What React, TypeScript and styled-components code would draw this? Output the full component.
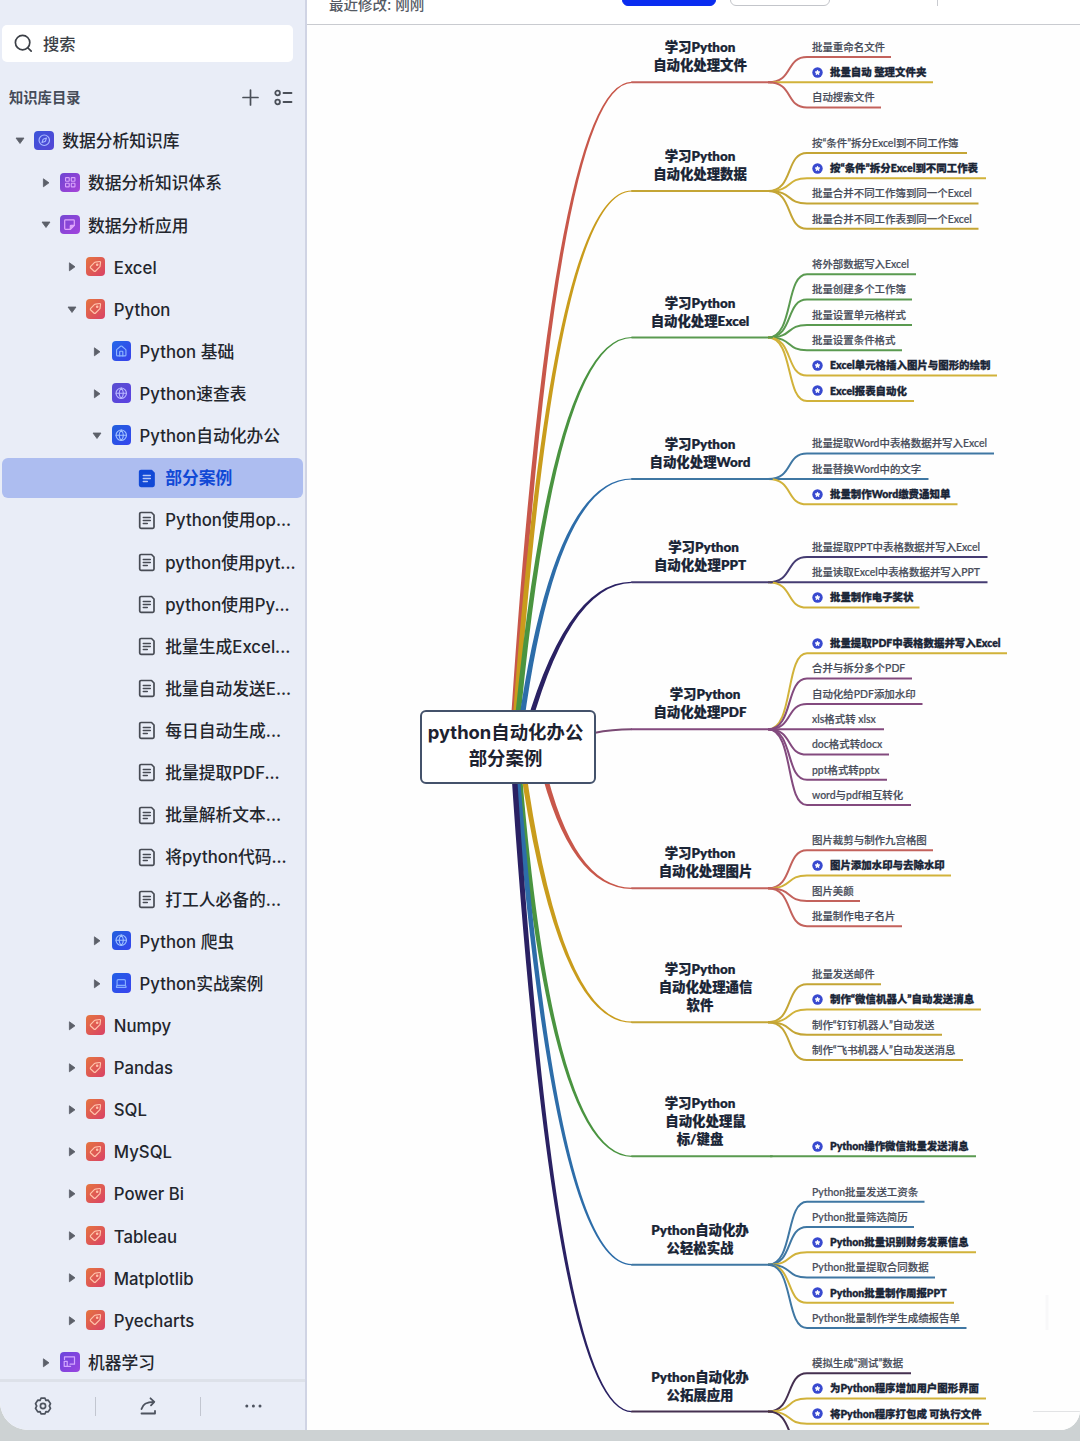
import { ReactNode } from "react";
import styled, { createGlobalStyle } from "styled-components";
import { Compass, Globe, House, Laptop, LayoutGrid } from "lucide-react";

// styles
const GlobalStyle = createGlobalStyle`
  * {
    box-sizing: border-box;
  }
  body {
    margin: 0;
    background: #cdd2d3;
    font-family: Inter, "Noto Sans CJK SC", sans-serif;
  }
`;

const Page = styled.div`
  width: 1080px;
  height: 1441px;
  padding-bottom: 11px;
  background: #cdd2d3;
  overflow: hidden;
`;

const Window = styled.div`
  display: flex;
  height: 1430px;
  border-radius: 0 0 20px 28px;
  background: #fff;
  overflow: hidden;
`;

const Sidebar = styled.aside`
  display: flex;
  flex-direction: column;
  width: 307px;
  flex: none;
  background: #e9edf7;
  border-right: 2px solid #d0d4e4;
`;

const SearchBox = styled.div`
  display: flex;
  align-items: center;
  gap: 10px;
  width: 291px;
  height: 37px;
  flex: none;
  margin: 25px 0 0 2px;
  padding: 0 0 1px 12px;
  border-radius: 5px;
  background: #fff;
  color: #3b3f46;
  font-size: 16.3px;
  font-weight: 500;

  span {
    margin-top: -1px;
  }
`;

const DirHeader = styled.div`
  display: flex;
  align-items: center;
  height: 58px;
  flex: none;
  padding: 13px 12px 0 9px;
  color: #454b57;
  font-size: 14.3px;
  font-weight: 600;

  span {
    flex: 1;
    margin-top: -2px;
  }
  svg + svg {
    margin-left: 15px;
  }
`;

const Tree = styled.div`
  flex: 1;
  min-height: 0;
  overflow: hidden;
`;

const Row = styled.div<{ $level: number; $active?: boolean }>`
  display: flex;
  align-items: center;
  height: ${(p) => (p.$active ? "40px" : "42.14px")};
  margin: ${(p) => (p.$active ? "1px 2px 1.14px" : "0")};
  padding-left: ${(p) => (p.$active ? 11 : 13) + p.$level * 25.75}px;
  border-radius: 6px;
  color: ${(p) => (p.$active ? "#1149d6" : "#23262d")};
  font-size: 16.75px;
  font-weight: ${(p) => (p.$active ? 700 : 500)};
  white-space: nowrap;
  background: ${(p) => (p.$active ? "#adbdf0" : "transparent")};
`;

const CaretSlot = styled.div`
  display: flex;
  justify-content: center;
  width: 14px;
  margin-right: 7px;
  flex: none;
`;

const IconSlot = styled.div<{ $doc: boolean }>`
  display: flex;
  justify-content: center;
  width: 20px;
  margin-right: 8.3px;
  padding-right: ${(p) => (p.$doc ? 1 : 0)}px;
  flex: none;

  svg {
    flex: none;
  }
`;

const Badge = styled.div<{ $bg: string }>`
  display: flex;
  align-items: center;
  justify-content: center;
  width: 19.5px;
  height: 19.5px;
  margin-top: -1.5px;
  border-radius: 4px;
  background: linear-gradient(135deg, ${(p) => p.$bg});
`;

const Label = styled.span`
  padding-top: 0.6px;
  line-height: 24px;
`;

const BottomBar = styled.div`
  display: flex;
  align-items: center;
  height: 51px;
  flex: none;
  border-top: 3px solid #dde1e9;
  color: #4d535f;
`;

const Action = styled.div`
  display: flex;
  justify-content: center;
  align-items: center;
  flex: 1;
  height: 19px;

  & + & {
    border-left: 1.5px solid #c2c6d0;
  }
  &:first-child {
    padding-right: 9px;
    flex: 0 0 95px;
  }
  &:nth-child(2) {
    flex: 0 0 105px;
  }
`;

const Main = styled.main`
  display: flex;
  flex-direction: column;
  flex: 1;
  min-width: 0;
`;

const TopBar = styled.header`
  display: flex;
  align-items: flex-end;
  height: 25px;
  flex: none;
  padding: 0 0 18px 22px;
  border-bottom: 1px solid #c9cbd0;
`;

const Modified = styled.span`
  width: 293px;
  height: 14px;
  margin-bottom: -5.5px;
  color: #555a64;
  font-size: 14.5px;
  font-weight: 500;
  line-height: 14px;
  white-space: nowrap;
`;

const TopButton = styled.div<{ $primary?: boolean }>`
  width: ${(p) => (p.$primary ? 94 : 100)}px;
  height: 30px;
  margin-right: ${(p) => (p.$primary ? 14 : 107)}px;
  border-radius: 6px;
  border: 1px solid ${(p) => (p.$primary ? "#0a2cf0" : "#c3c5ca")};
  background: ${(p) => (p.$primary ? "#0a2cf0" : "#fff")};
`;

const TopDivider = styled.div`
  width: 1px;
  height: 30px;
  background: #c9cbd0;
`;

// the free canvas: every node has its own place on it
const Canvas = styled.div`
  position: relative;
  flex: 1;
  overflow: hidden;
  background: #fefefe;
`;

const Lines = styled.svg`
  position: absolute;
  inset: 0;
`;

const RootNode = styled.div`
  position: absolute;
  left: 113px;
  top: 685px;
  width: 176px;
  height: 74px;
  padding: 7px 5px 0 0;
  border: 2px solid #44526b;
  border-radius: 6px;
  background: #fff;
  color: #1d2230;
  font-size: 18.4px;
  font-weight: 700;
  line-height: 26px;
  text-align: center;
  white-space: nowrap;
`;

const TitleLine = styled.div<{ $x: number; $y: number }>`
  position: absolute;
  left: ${(p) => p.$x - 307}px;
  top: ${(p) => p.$y - 25}px;
  transform: translate(-50%, -50%);
  color: #1a2536;
  font-family: Lato, "Noto Sans CJK SC", sans-serif;
  font-size: 13.4px;
  font-weight: 800;
  line-height: 18px;
  white-space: nowrap;
  -webkit-text-stroke: 0.2px #1a2536;
`;

const Leaf = styled.div<{ $y: number; $star?: boolean }>`
  position: absolute;
  left: 505px;
  top: ${(p) => p.$y - 25 - 18.7}px;
  display: flex;
  align-items: center;
  gap: 7px;
  height: 16px;
  color: ${(p) => (p.$star ? "#1a2536" : "#484d5a")};
  font-family: Lato, "Noto Sans CJK SC", sans-serif;
  font-size: 10.45px;
  font-weight: ${(p) => (p.$star ? 800 : 500)};
  white-space: nowrap;
  -webkit-text-stroke: ${(p) => (p.$star ? "0.3px #1a2536" : "0.2px #484d5a")};

  svg {
    flex: none;
    margin-top: 1px;
  }
`;

const RED = "#c8574a";
const YELLOW = "#c99c1c";
const GREEN = "#4a9440";
const BLUE = "#2d6da9";
const NAVY = "#2a2163";
const PURPLE = "#843a7a";
const STAR = "#d1b23a";

type LeafItem = { text: string; y: number; end: number; star?: boolean };
type Topic = {
  color: string;
  line: string;
  y: number;
  // start x of the branch under the root and x of its control point
  start: number;
  bend: number;
  title: { text: string; x?: number }[];
  leaves: LeafItem[];
};

const leaf = (text: string, y: number, end: number, star = false): LeafItem => ({
  text,
  y,
  end,
  star,
});

const topics: Topic[] = [
  {
    color: RED,
    line: "#c3625c",
    y: 82.3,
    start: 512,
    bend: 553,
    title: [{ text: "学习Python" }, { text: "自动化处理文件" }],
    leaves: [
      leaf("批量重命名文件", 57, 891),
      leaf("批量自动 整理文件夹", 82.3, 933, true),
      leaf("自动搜索文件", 107.5, 881),
    ],
  },
  {
    color: YELLOW,
    line: "#c4a535",
    y: 191,
    start: 513.5,
    bend: 552,
    title: [{ text: "学习Python" }, { text: "自动化处理数据" }],
    leaves: [
      leaf("按“条件”拆分Excel到不同工作簿", 153, 967),
      leaf("按“条件”拆分Excel到不同工作表", 178.3, 986, true),
      leaf("批量合并不同工作簿到同一个Excel", 203.5, 978.5),
      leaf("批量合并不同工作表到同一个Excel", 228.8, 978.5),
    ],
  },
  {
    color: GREEN,
    line: "#5a9a50",
    y: 337.5,
    start: 515,
    bend: 552,
    title: [{ text: "学习Python" }, { text: "自动化处理Excel" }],
    leaves: [
      leaf("将外部数据写入Excel", 274.3, 916),
      leaf("批量创建多个工作簿", 299.6, 912),
      leaf("批量设置单元格样式", 325, 912),
      leaf("批量设置条件格式", 350.3, 902),
      leaf("Excel单元格插入图片与图形的绘制", 375.6, 997, true),
      leaf("Excel报表自动化", 401, 914, true),
    ],
  },
  {
    color: BLUE,
    line: "#3f77a3",
    y: 479,
    start: 518,
    bend: 552,
    title: [{ text: "学习Python" }, { text: "自动化处理Word" }],
    leaves: [
      leaf("批量提取Word中表格数据并写入Excel", 453.6, 994),
      leaf("批量替换Word中的文字", 479, 928.5),
      leaf("批量制作Word缴费通知单", 504.3, 957.5, true),
    ],
  },
  {
    color: NAVY,
    line: "#453c72",
    y: 582.3,
    start: 522.6,
    bend: 565,
    title: [{ text: "学习Python", x: 703.5 }, { text: "自动化处理PPT" }],
    leaves: [
      leaf("批量提取PPT中表格数据并写入Excel", 557, 987.5),
      leaf("批量读取Excel中表格数据并写入PPT", 582.3, 987.5),
      leaf("批量制作电子奖状", 607.6, 919.5, true),
    ],
  },
  {
    color: PURPLE,
    line: "#834a7e",
    y: 729.3,
    start: 0,
    bend: 0,
    title: [{ text: "学习Python", x: 705 }, { text: "自动化处理PDF" }],
    leaves: [
      leaf("批量提取PDF中表格数据并写入Excel", 653.3, 1007, true),
      leaf("合并与拆分多个PDF", 678.6, 912),
      leaf("自动化给PDF添加水印", 704, 922.5),
      leaf("xls格式转 xlsx", 729.3, 884),
      leaf("doc格式转docx", 754.6, 889),
      leaf("ppt格式转pptx", 779.8, 887),
      leaf("word与pdf相互转化", 805, 911),
    ],
  },
  {
    color: RED,
    line: "#c3625c",
    y: 888.3,
    start: 538,
    bend: 568,
    title: [{ text: "学习Python" }, { text: "自动化处理图片", x: 705.5 }],
    leaves: [
      leaf("图片裁剪与制作九宫格图", 850.3, 933),
      leaf("图片添加水印与去除水印", 875.6, 951, true),
      leaf("图片美颜", 901, 860),
      leaf("批量制作电子名片", 926.2, 902),
    ],
  },
  {
    color: YELLOW,
    line: "#c4a535",
    y: 1022.2,
    start: 520,
    bend: 557,
    title: [
      { text: "学习Python" },
      { text: "自动化处理通信", x: 705.5 },
      { text: "软件" },
    ],
    leaves: [
      leaf("批量发送邮件", 984.3, 881),
      leaf("制作“微信机器人”自动发送消息", 1009.6, 981, true),
      leaf("制作“钉钉机器人”自动发送", 1034.8, 942),
      leaf("制作“飞书机器人”自动发送消息", 1060, 963),
    ],
  },
  {
    color: GREEN,
    line: "#5a9a50",
    y: 1156.3,
    start: 517,
    bend: 549,
    title: [
      { text: "学习Python" },
      { text: "自动化处理鼠", x: 705.5 },
      { text: "标/键盘" },
    ],
    leaves: [leaf("Python操作微信批量发送消息", 1156.3, 976, true)],
  },
  {
    color: BLUE,
    line: "#3f77a3",
    y: 1264.7,
    start: 515,
    bend: 554,
    title: [{ text: "Python自动化办" }, { text: "公轻松实战" }],
    leaves: [
      leaf("Python批量发送工资条", 1201.7, 924.5),
      leaf("Python批量筛选简历", 1227, 914),
      leaf("Python批量识别财务发票信息", 1252.2, 976, true),
      leaf("Python批量提取合同数据", 1277.5, 935),
      leaf("Python批量制作周报PPT", 1302.8, 954, true),
      leaf("Python批量制作学生成绩报告单", 1328, 966.5),
    ],
  },
  {
    color: NAVY,
    line: "#453050",
    y: 1411.6,
    start: 512.5,
    bend: 554,
    title: [{ text: "Python自动化办" }, { text: "公拓展应用" }],
    leaves: [
      leaf("模拟生成“测试”数据", 1373.3, 911),
      leaf("为Python程序增加用户图形界面", 1398.5, 986, true),
      leaf("将Python程序打包成 可执行文件", 1423.7, 989, true),
      leaf("", 1449, 960),
    ],
  },
];

// thick at the root, thin at the topic line
const branchPath = (t: Topic) => {
  const up = t.y < 747 ? 1 : -1;
  return `M${t.start - 2.8} 747 Q${t.bend - 1.6} ${t.y - up} 632 ${t.y - 0.6 * up}
    V${t.y + 0.6 * up} Q${t.bend + 1.6} ${t.y + up} ${t.start + 2.8} 747 Z`;
};

const leafPath = (t: Topic, l: LeafItem) =>
  l.y === t.y
    ? `M770 ${l.y} H${l.end}`
    : `M768 ${t.y} C794 ${t.y} 785 ${l.y} 807 ${l.y} H${l.end}`;

const leafColor = (t: Topic, l: LeafItem) =>
  l.star && t.leaves.length > 1 ? STAR : t.line;

const Star = () => (
  <svg width="11" height="11" viewBox="0 0 11 11">
    <circle cx="5.5" cy="5.5" r="5.2" fill="#3849cf" />
    <path
      d="M5.5 3.2l.7 1.5 1.6.2-1.2 1.1.3 1.6-1.4-.8-1.4.8.3-1.6-1.2-1.1 1.6-.2z"
      fill="#fff"
      stroke="#fff"
      strokeWidth=".9"
      strokeLinejoin="round"
    />
  </svg>
);

const MindMap = () => (
  <Canvas>
    <Lines width="773" height="1405" viewBox="307 25 773 1405" fill="none">
      {topics.map((t) =>
        t.start ? (
          <path key={t.y} d={branchPath(t)} fill={t.color} />
        ) : (
          <path
            key={t.y}
            d="M594 733 Q612 729.3 632 729.3"
            stroke="#7a4a74"
            strokeWidth="2"
          />
        )
      )}
      {topics.map((t) => (
        <g key={t.y} strokeWidth="2">
          {t.leaves.map((l) => (
            <path key={l.y} d={leafPath(t, l)} stroke={leafColor(t, l)} />
          ))}
          <path d={`M632 ${t.y} H772`} stroke={t.line} strokeLinecap="round" />
        </g>
      ))}
      <path d="M1033 1411.5 H1080" stroke="#e2e3e5" />
      <path d="M1047 1295 V1330" stroke="#f8f8f9" strokeWidth="3" />
    </Lines>
    <RootNode>
      python自动化办公
      <br />
      部分案例
    </RootNode>
    {topics.map((t) =>
      t.title.map((line, i) => (
        <TitleLine
          key={`${t.y}-${i}`}
          $x={line.x ?? 700}
          $y={t.y - 17 - (t.title.length - 1 - i) * 18}
        >
          {line.text}
        </TitleLine>
      ))
    )}
    {topics.map((t) =>
      t.leaves.map((l) => (
        <Leaf key={l.y} $y={l.y} $star={l.star}>
          {l.star && <Star />}
          {l.text}
        </Leaf>
      ))
    )}
  </Canvas>
);

// sidebar icons
const Caret = ({ open }: { open?: boolean }) => (
  <svg width="10" height="10" viewBox="0 0 10 10">
    <path
      d={open ? "M1 2h8L5 7.5z" : "M2.4 .8v8L8 4.8z"}
      fill="#5c6069"
      stroke="#5c6069"
      strokeWidth=".8"
      strokeLinejoin="round"
    />
  </svg>
);

const DocIcon = ({ filled }: { filled?: boolean }) => (
  <svg
    width="18"
    height="19"
    viewBox="0 0 18 19"
    fill="none"
    strokeLinecap="round"
    strokeLinejoin="round"
  >
    <path
      d="M3 1.5h10.5l2.5 2.5v12a1.3 1.3 0 0 1-1.3 1.3H3A1.3 1.3 0 0 1 1.7 16V2.8A1.3 1.3 0 0 1 3 1.5z"
      fill={filled ? "#1149d6" : "none"}
      stroke={filled ? "#1149d6" : "#474b54"}
      strokeWidth="1.7"
    />
    <path
      d="M5.3 6.5h7M5.3 9.5h7M5.3 12.5h4"
      stroke={filled ? "#b9c9f7" : "#474b54"}
      strokeWidth="1.5"
    />
  </svg>
);

const Glyph = ({ color, children }: { color: string; children: ReactNode }) => (
  <svg
    width="13"
    height="13"
    viewBox="0 0 13 13"
    fill="none"
    stroke={color}
    strokeWidth="1.2"
    strokeLinecap="round"
    strokeLinejoin="round"
  >
    {children}
  </svg>
);

const iconSize = { size: 12.5, strokeWidth: 2.2 };

const badges: Record<string, { bg: string; icon: ReactNode }> = {
  compass: {
    bg: "#3b55d9, #5646d6",
    icon: <Compass {...iconSize} color="#a9b8ff" />,
  },
  grid: {
    bg: "#6d45d2, #a843d8",
    icon: <LayoutGrid {...iconSize} color="#d9a3fb" />,
  },
  note: {
    bg: "#7548d2, #a243dd",
    icon: (
      <Glyph color="#dfa6fb">
        <path d="M2.5 1.8h8a.8.8 0 0 1 .8.8v4.7l-4 4H2.500a.8.8 0 0 1-.8-.8V2.600a.8.8 0 0 1 .8-.8z" />
        <path d="M11.3 7.3H8a.7.7 0 0 0-.7.7v3.3z" fill="#dfa6fb" />
      </Glyph>
    ),
  },
  tag: {
    bg: "#e5753f, #d94166",
    icon: (
      <Glyph color="#ffc3ab">
        <path d="M6.3 2.1l4.3-.6a.8.8 0 0 1 .9.9l-.5 3.9a1 1 0 0 1-.3.6L6.6 11a1.2 1.2 0 0 1-1.7 0L1.7 8a1.2 1.2 0 0 1 0-1.7l3.900-3.900a1.2 1.2 0 0 1 .7-.3z" />
        <circle cx="8.2" cy="4.8" r=".7" />
      </Glyph>
    ),
  },
  house: {
    bg: "#2468e8, #3940ea",
    icon: <House {...iconSize} color="#8fb5ff" />,
  },
  globeViolet: {
    bg: "#5a4fd0, #5b41e2",
    icon: <Globe {...iconSize} color="#b9b6ff" />,
  },
  globe: {
    bg: "#2160dd, #3545ee",
    icon: <Globe {...iconSize} color="#9fc0ff" />,
  },
  laptop: {
    bg: "#2160e6, #3a43ee",
    icon: <Laptop {...iconSize} color="#86adff" />,
  },
  board: {
    bg: "#6a45dc, #9a45e0",
    icon: (
      <Glyph color="#d3a8ff">
        <path d="M1.5 4.5V1.8h10v7.4H7M1.2 6.3h3v5h-3zM4.2 11.3h3.4" />
      </Glyph>
    ),
  },
};

type Item = {
  level: number;
  text: string;
  icon: string;
  open?: boolean;
  active?: boolean;
};

const tree: Item[] = [
  { level: 0, text: "数据分析知识库", icon: "compass", open: true },
  { level: 1, text: "数据分析知识体系", icon: "grid" },
  { level: 1, text: "数据分析应用", icon: "note", open: true },
  { level: 2, text: "Excel", icon: "tag" },
  { level: 2, text: "Python", icon: "tag", open: true },
  { level: 3, text: "Python 基础", icon: "house" },
  { level: 3, text: "Python速查表", icon: "globeViolet" },
  { level: 3, text: "Python自动化办公", icon: "globe", open: true },
  { level: 4, text: "部分案例", icon: "doc", active: true },
  { level: 4, text: "Python使用op...", icon: "doc" },
  { level: 4, text: "python使用pyt...", icon: "doc" },
  { level: 4, text: "python使用Py...", icon: "doc" },
  { level: 4, text: "批量生成Excel...", icon: "doc" },
  { level: 4, text: "批量自动发送E...", icon: "doc" },
  { level: 4, text: "每日自动生成...", icon: "doc" },
  { level: 4, text: "批量提取PDF...", icon: "doc" },
  { level: 4, text: "批量解析文本...", icon: "doc" },
  { level: 4, text: "将python代码...", icon: "doc" },
  { level: 4, text: "打工人必备的...", icon: "doc" },
  { level: 3, text: "Python 爬虫", icon: "globe" },
  { level: 3, text: "Python实战案例", icon: "laptop" },
  { level: 2, text: "Numpy", icon: "tag" },
  { level: 2, text: "Pandas", icon: "tag" },
  { level: 2, text: "SQL", icon: "tag" },
  { level: 2, text: "MySQL", icon: "tag" },
  { level: 2, text: "Power Bi", icon: "tag" },
  { level: 2, text: "Tableau", icon: "tag" },
  { level: 2, text: "Matplotlib", icon: "tag" },
  { level: 2, text: "Pyecharts", icon: "tag" },
  { level: 1, text: "机器学习", icon: "board" },
];

const TreeRow = ({ item }: { item: Item }) => {
  const isDoc = item.icon === "doc";
  return (
    <Row $level={item.level} $active={item.active}>
      <CaretSlot>{!isDoc && <Caret open={item.open} />}</CaretSlot>
      <IconSlot $doc={isDoc}>
        {isDoc ? (
          <DocIcon filled={item.active} />
        ) : (
          <Badge $bg={badges[item.icon].bg}>{badges[item.icon].icon}</Badge>
        )}
      </IconSlot>
      <Label>{item.text}</Label>
    </Row>
  );
};

const App = () => {
  return (
    <Page>
      <GlobalStyle />
      <Window>
        <Sidebar>
          <SearchBox>
            <svg
              width="19"
              height="19"
              viewBox="0 0 19 19"
              fill="none"
              stroke="#3b3f46"
              strokeWidth="1.7"
              strokeLinecap="round"
            >
              <circle cx="8.6" cy="8.6" r="7.2" />
              <path d="M14 14l3.2 3.2" />
            </svg>
            <span>搜索</span>
          </SearchBox>
          <DirHeader>
            <span>知识库目录</span>
            <svg width="17" height="17" viewBox="0 0 17 17">
              <path
                d="M8.5 1v15M1 8.5h15"
                stroke="#4a4f58"
                strokeWidth="1.7"
                strokeLinecap="round"
              />
            </svg>
            <svg
              width="19"
              height="17"
              viewBox="0 0 19 17"
              fill="none"
              stroke="#4a4f58"
              strokeWidth="1.8"
              strokeLinecap="round"
            >
              <circle cx="3.6" cy="4" r="2.3" />
              <circle cx="3.6" cy="13" r="2.3" />
              <path d="M9.5 4h8M9.5 13h8" />
            </svg>
          </DirHeader>
          <Tree>
            {tree.map((item) => (
              <TreeRow key={item.text} item={item} />
            ))}
          </Tree>
          <BottomBar>
            <Action>
              <svg
                width="18"
                height="18"
                viewBox="0 0 18 18"
                fill="none"
                stroke="currentColor"
                strokeWidth="1.7"
                strokeLinejoin="round"
              >
                <path d="M7 1.2h4l.9 2.2 2.3-.3 2.3 3.6L15.3 9l1.2 2.3-2.3 3.6-2.3-.3L11 16.8H7l-.9-2.2-2.3.3-2.3-3.6L2.7 9 1.5 6.7l2.3-3.6 2.3.3z" />
                <circle cx="9" cy="9" r="2.6" />
              </svg>
            </Action>
            <Action>
              <svg
                width="18"
                height="18"
                viewBox="0 0 18 18"
                fill="none"
                stroke="currentColor"
                strokeWidth="1.8"
                strokeLinecap="round"
                strokeLinejoin="round"
              >
                <path d="M2.5 12C3.5 7.5 7 4.8 15 4.8M11.5 1.3l3.8 3.5L12 8.3M2.5 16.5H16V14" />
              </svg>
            </Action>
            <Action>
              <svg width="18" height="4" viewBox="0 0 18 4" fill="currentColor">
                <circle cx="2.8" cy="2" r="1.5" />
                <circle cx="9.4" cy="2" r="1.5" />
                <circle cx="16" cy="2" r="1.5" />
              </svg>
            </Action>
          </BottomBar>
        </Sidebar>
        <Main>
          <TopBar>
            <Modified>最近修改: 刚刚</Modified>
            <TopButton $primary />
            <TopButton />
            <TopDivider />
          </TopBar>
          <MindMap />
        </Main>
      </Window>
    </Page>
  );
};

export default App;
